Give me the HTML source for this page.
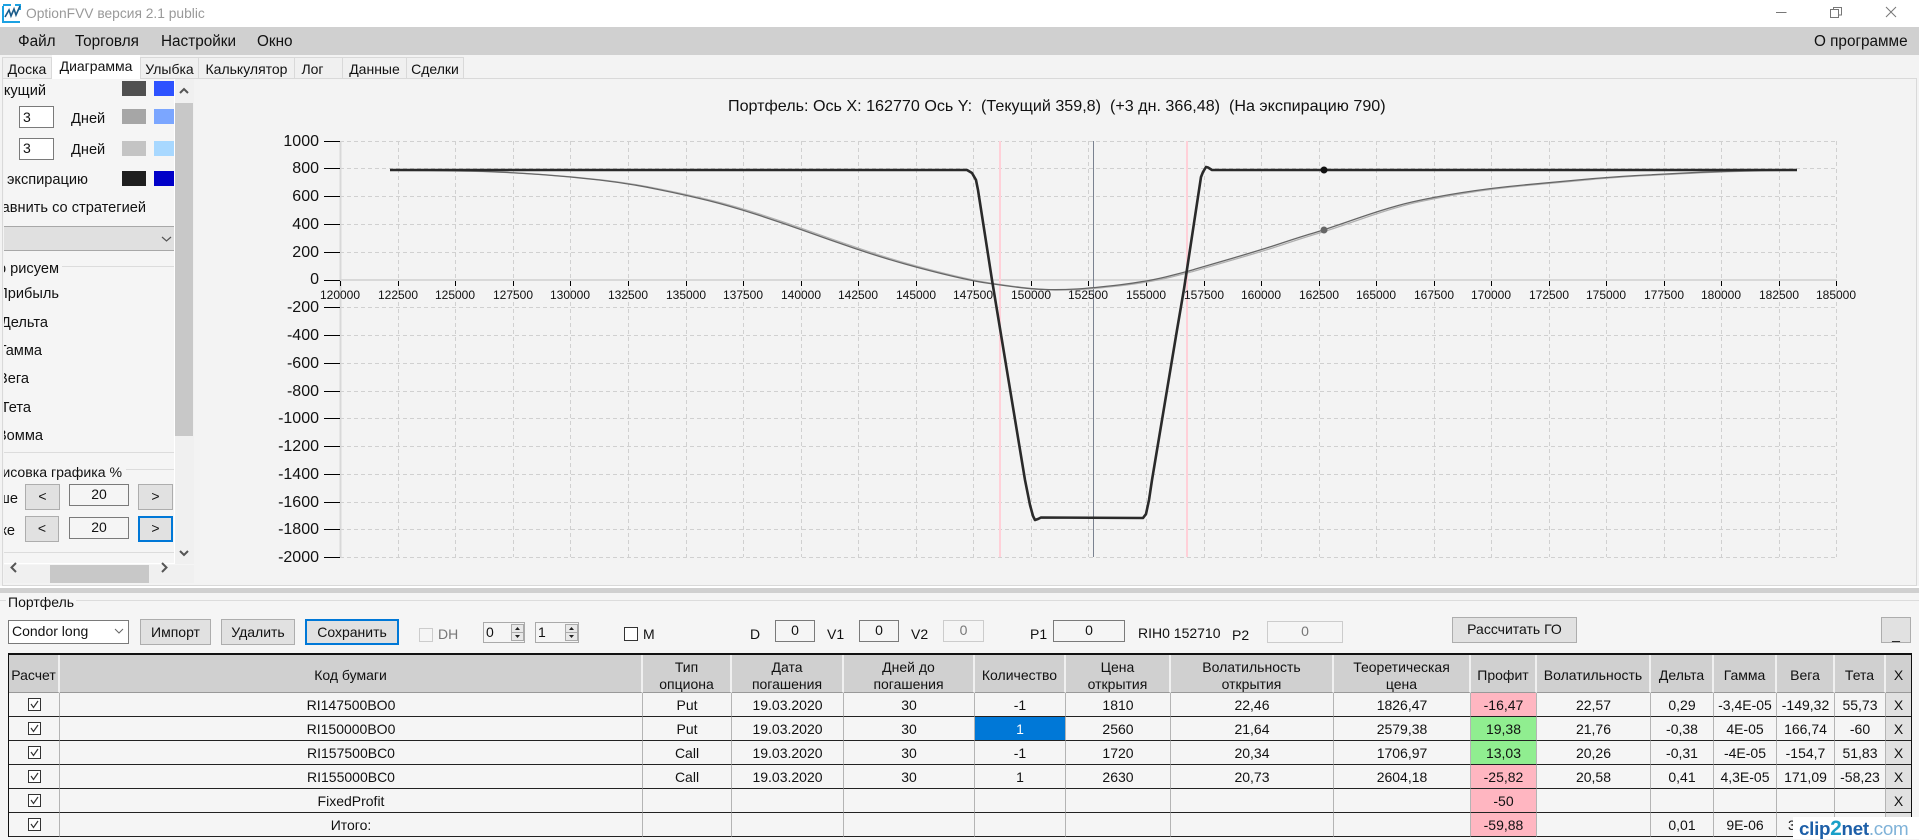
<!DOCTYPE html>
<html><head><meta charset="utf-8"><title>OptionFVV</title>
<style>
html,body{margin:0;padding:0}
body{width:1919px;height:839px;position:relative;overflow:hidden;background:#f5f5f5;font-family:"Liberation Sans","Noto Sans CJK SC",sans-serif;font-size:14px;color:#111}
.a{position:absolute;white-space:pre}
.tab{position:absolute;top:57px;height:21px;line-height:22px;text-align:center;background:#f0f0f0;border:1px solid #d9d9d9;border-bottom:0;box-sizing:border-box;font-size:14px}
.sw{position:absolute;width:24px;height:15px}
.sb{position:absolute;width:20px;height:15px;left:154px}
.inp{position:absolute;box-sizing:border-box;border:1px solid #7a7a7a;background:#f5f5f5;text-align:center;font-size:14px}
.btn{position:absolute;box-sizing:border-box;border:1px solid #adadad;background:#e1e1e1;text-align:center;font-size:14px}
.r{position:absolute;width:300px;text-align:right;font-size:14.6px;height:18px;line-height:18px;white-space:pre}
table{position:absolute;left:8px;top:653px;width:1904px;table-layout:fixed;border-collapse:separate;border-spacing:0;border-top:2px solid #111;border-left:1px solid #111;border-right:1px solid #111;box-sizing:border-box;font-size:14px}
th{background:#d0d0d0;font-weight:normal;height:38px;padding:4px 0 0;border-right:2px solid #f0f0f0;border-bottom:1px solid #999;line-height:16.500px;overflow:hidden;box-sizing:border-box;vertical-align:middle}
td{height:24px;padding:0;border-right:1px solid #b4b4b4;border-bottom:1px solid #222;text-align:center;box-sizing:border-box;background:#f5f5f5;overflow:hidden;white-space:nowrap}
td.p{background:#ffb6c1}td.g{background:#90ee90}td.s{background:#0078d7;color:#fff}
td.x{background:#e1e1e1;border-right:0}
.c{display:inline-block;width:11px;height:11px;border:1px solid #333;background:#fff;position:relative;vertical-align:-1px}
.c svg{position:absolute;left:0;top:0}
</style></head><body>

<!-- title bar -->
<div class="a" style="left:0;top:0;width:1919px;height:27px;background:#fff"></div>
<svg class="a" style="left:0;top:0" width="26" height="27">
<path d="M3 6V22H20" fill="none" stroke="#1ba1e2" stroke-width="2"/>
<path d="M3 5H11M15 5H20V10" fill="none" stroke="#1ba1e2" stroke-width="2"/>
<path d="M5 17L9 10L11 16L14 9L16 15L20 6" fill="none" stroke="#1b5c8a" stroke-width="1.6"/>
</svg>
<div class="a" style="left:26px;top:5px;font-size:13.800px;line-height:18px;color:#999">OptionFVV версия 2.1 public</div>
<svg class="a" style="left:1770px;top:0" width="135" height="27" fill="none" stroke="#777">
<path d="M6 12.500H16.500"/><path d="M60.500 9.500H68.500V17.500H60.500ZM63.500 9.500V7.500H71.500V15H68.500"/><path d="M116 7L126 17M126 7L116 17"/>
</svg>

<!-- menu -->
<div class="a" style="left:0;top:27px;width:1919px;height:28px;background:#d0d0d0"></div>
<div class="a" style="left:18px;top:33px;font-size:15.300px;line-height:18px">Файл</div>
<div class="a" style="left:75px;top:33px;font-size:15.300px;line-height:18px">Торговля</div>
<div class="a" style="left:161px;top:33px;font-size:15.300px;line-height:18px">Настройки</div>
<div class="a" style="left:257px;top:33px;font-size:15.300px;line-height:18px">Окно</div>
<div class="a" style="left:1814px;top:33px;font-size:15.300px;line-height:18px">О программе</div>

<!-- tabs -->
<div class="a" style="left:0;top:55px;width:1919px;height:533px;background:#f3f3f3"></div>
<div class="a" style="left:2px;top:78px;width:1915px;height:508px;box-sizing:border-box;border:1px solid #d9d9d9;outline:0;background:#f3f3f3"></div>
<div class="tab" style="left:2px;width:50px">Доска</div>
<div class="tab" style="left:52px;top:55px;width:88px;height:24px;background:#fff;border:0">Диаграмма</div>
<div class="tab" style="left:140px;width:59px">Улыбка</div>
<div class="tab" style="left:198px;width:97px">Калькулятор</div>
<div class="tab" style="left:294px;width:49px;padding-right:12px">Лог</div>
<div class="tab" style="left:342px;width:65px">Данные</div>
<div class="tab" style="left:406px;width:58px">Сделки</div>

<!-- left panel -->
<div class="a" style="left:4px;top:79px;width:190px;height:504px;background:#f5f5f5;overflow:hidden">
 <div class="a" style="left:171px;top:0;width:19px;height:485px;background:#f0f0f0"></div>
</div>
<div class="a" style="left:4px;top:79px;width:171px;height:485px;overflow:hidden;border-right:1px solid #fff;box-sizing:border-box;border-bottom:1px solid #fff">
 <div class="r" style="left:-258px;top:3px">Текущий</div>
 <div class="r" style="left:-216px;top:92px">На экспирацию</div>
 <div class="r" style="left:-158px;top:120px">Сравнить со стратегией</div>
 <div class="a" style="left:0;top:147px;width:170px;height:23px;background:#e0e0e0;border-bottom:1px solid #a8a8a8;border-top:1px solid #a8a8a8"></div>
 <div class="r" style="left:-245px;top:181px">Что рисуем</div>
 <div class="a" style="left:58px;top:187px;width:113px;height:1px;background:#dcdcdc"></div>
 <div class="r" style="left:-245px;top:206px">Прибыль</div>
 <div class="r" style="left:-256px;top:235px">Дельта</div>
 <div class="r" style="left:-262px;top:263px">Гамма</div>
 <div class="r" style="left:-275px;top:291px">Вега</div>
 <div class="r" style="left:-273px;top:320px">Тета</div>
 <div class="r" style="left:-261px;top:348px">Вомма</div>
 <div class="a" style="left:0;top:373px;width:171px;height:1px;background:#dcdcdc"></div>
 <div class="r" style="left:-182px;top:384px;font-size:14.100px">Отрисовка графика %</div>
 <div class="a" style="left:122px;top:390px;width:49px;height:1px;background:#dcdcdc"></div>
 <div class="r" style="left:-286px;top:411px">Выше</div>
 <div class="r" style="left:-289px;top:443px">Ниже</div>
 <div class="a" style="left:0;top:473px;width:171px;height:1px;background:#dcdcdc"></div>
</div>
<div class="sw" style="left:122px;top:81px;background:#505050"></div><div class="sb" style="top:81px;background:#2d52ff"></div>
<div class="sw" style="left:122px;top:109px;background:#a6a6a6"></div><div class="sb" style="top:109px;background:#7ba6ff"></div>
<div class="sw" style="left:122px;top:141px;background:#c4c4c4"></div><div class="sb" style="top:141px;background:#a8d8ff"></div>
<div class="sw" style="left:122px;top:171px;background:#1e1e1e"></div><div class="sb" style="top:171px;background:#0000c8"></div>
<div class="inp" style="left:19px;top:106px;width:35px;height:22px;text-align:left;padding-left:3px;line-height:20px;background:#fff">3</div>
<div class="inp" style="left:19px;top:138px;width:35px;height:22px;text-align:left;padding-left:3px;line-height:19px;background:#fff">3</div>
<div class="a" style="left:71px;top:110px;font-size:14.600px;line-height:18px">Дней</div>
<div class="a" style="left:71px;top:141px;font-size:14.600px;line-height:18px">Дней</div>
<svg class="a" style="left:160px;top:234px" width="14" height="10"><path d="M2 3L6.500 7L11 3" fill="none" stroke="#555" stroke-width="1.200"/></svg>

<div class="btn" style="left:25px;top:484px;width:35px;height:26px;line-height:22px">&lt;</div>
<div class="inp" style="left:69px;top:484px;width:60px;height:22px;line-height:18px">20</div>
<div class="btn" style="left:138px;top:484px;width:35px;height:26px;line-height:22px">&gt;</div>
<div class="btn" style="left:25px;top:516px;width:34px;height:26px;line-height:22px">&lt;</div>
<div class="inp" style="left:69px;top:517px;width:60px;height:22px;line-height:18px">20</div>
<div class="btn" style="left:138px;top:516px;width:35px;height:26px;line-height:21px;border:2px solid #0078d7">&gt;</div>

<!-- scrollbars -->
<div class="a" style="left:175px;top:103px;width:18px;height:333px;background:#c8c8c8"></div>
<div class="a" style="left:4px;top:565px;width:190px;height:18px;background:#f0f0f0"></div>
<div class="a" style="left:50px;top:565px;width:99px;height:18px;background:#c8c8c8"></div>
<svg class="a" style="left:0;top:79px" width="200" height="505" fill="none" stroke="#555" stroke-width="2">
<path d="M180 14L184 10L188 14"/><path d="M180 472L184 476L188 472"/><path d="M16 484L11.500 488.500L16 493"/><path d="M162 484L166.500 488.500L162 493"/>
</svg>

<!-- chart -->
<svg class="a" style="left:0;top:0" width="1919" height="600" font-family="'Liberation Sans',sans-serif">
<g fill="none" stroke="#d0d0d0" stroke-dasharray="4 3" shape-rendering="crispEdges">
<path d="M398.500 141V557M455.500 141V557M513.500 141V557M570.500 141V557M628.500 141V557M686.500 141V557M743.500 141V557M801.500 141V557M858.500 141V557M916.500 141V557M973.500 141V557M1031.500 141V557M1088.500 141V557M1146.500 141V557M1204.500 141V557M1261.500 141V557M1319.500 141V557M1376.500 141V557M1434.500 141V557M1491.500 141V557M1549.500 141V557M1606.500 141V557M1664.500 141V557M1721.500 141V557M1779.500 141V557M1836.500 141V557"/>
<path d="M340 141.500H1837M340 168.500H1837M340 196.500H1837M340 224.500H1837M340 252.500H1837M340 307.500H1837M340 335.500H1837M340 363.500H1837M340 391.500H1837M340 418.500H1837M340 446.500H1837M340 474.500H1837M340 502.500H1837M340 529.500H1837M340 557.500H1837"/>
</g>
<path d="M340.500 141V558" stroke="#d8d8d8" stroke-width="2" fill="none"/>
<path d="M340 280H1837" stroke="#d8d8d8" stroke-width="2" fill="none"/>
<g stroke="#000" fill="none" shape-rendering="crispEdges">
<path d="M324 141.500H340M324 168.500H340M324 196.500H340M324 224.500H340M324 252.500H340M324 280.500H340M324 307.500H340M324 335.500H340M324 363.500H340M324 391.500H340M324 418.500H340M324 446.500H340M324 474.500H340M324 502.500H340M324 529.500H340M324 557.500H340"/>
<path d="M340.500 281V286M398.500 281V286M455.500 281V286M513.500 281V286M570.500 281V286M628.500 281V286M686.500 281V286M743.500 281V286M801.500 281V286M858.500 281V286M916.500 281V286M973.500 281V286M1031.500 281V286M1088.500 281V286M1146.500 281V286M1204.500 281V286M1261.500 281V286M1319.500 281V286M1376.500 281V286M1434.500 281V286M1491.500 281V286M1549.500 281V286M1606.500 281V286M1664.500 281V286M1721.500 281V286M1779.500 281V286M1836.500 281V286"/>
</g>
<path d="M1000 141V557M1187 141V557" stroke="#ffd0d8" stroke-width="2"/>
<path d="M1093.500 141V557" stroke="#7a8290" stroke-width="1"/>
<path transform="translate(5,.3)" fill="none" stroke="#b0b0b0" stroke-width="1.300" d="M390 170Q460 170.500 486.500 171.500Q513 172.500 542 174.600Q571 176.700 599.500 180Q628 183.300 657 189.200Q686 195 708 200.500Q730 206 755 214Q780 222 805 231Q830 240 855 248.500Q880 257 905 264Q930 271 951.500 276Q973 281 986.500 283Q1000 285 1015.500 287Q1031 289 1045.500 289.500Q1060 290 1076.500 289Q1093 288 1119.500 284.900Q1146 281.700 1166.500 276.700Q1187 271.700 1195.500 269Q1204 266.500 1232.500 258.200Q1261 250 1280.500 243.500Q1300 237 1312 233.500Q1324 230 1357 218.500Q1390 207 1412 202Q1434 197 1462.500 192.500Q1491 188 1525.500 184.800Q1560 181.700 1583 179.500Q1606 177.300 1635 175.600Q1664 174 1692 172.700Q1720 171.500 1750 170.700Q1780 170 1792 170"/>
<path fill="none" stroke="#666" stroke-width="1.300" d="M390 170Q460 170.500 486.500 171.500Q513 172.500 542 174.600Q571 176.700 599.500 180Q628 183.300 657 189.200Q686 195 708 200.500Q730 206 755 214Q780 222 805 231Q830 240 855 248.500Q880 257 905 264Q930 271 951.500 276Q973 281 986.500 283Q1000 285 1015.500 287Q1031 289 1045.500 289.500Q1060 290 1076.500 289Q1093 288 1119.500 284.900Q1146 281.700 1166.500 276.700Q1187 271.700 1195.500 269Q1204 266.500 1232.500 258.200Q1261 250 1280.500 243.500Q1300 237 1312 233.500Q1324 230 1357 218.500Q1390 207 1412 202Q1434 197 1462.500 192.500Q1491 188 1525.500 184.800Q1560 181.700 1583 179.500Q1606 177.300 1635 175.600Q1664 174 1692 172.700Q1720 171.500 1750 170.700Q1780 170 1797 170"/>
<polyline fill="none" stroke="#2a2a2a" stroke-width="2.600" stroke-linejoin="round" points="390,170 960,170 967,170 972,173 976,180 978,190 992,280 1025,480 1030,505 1033,516 1035,520 1038,519 1041,517.500 1143,518 1146,514 1149,500 1152,480 1177,330 1184,289 1201,177 1203,172 1206,167 1208,167.500 1212,170 1797,170"/>
<circle cx="1324" cy="170" r="3.500" fill="#111"/>
<circle cx="1324" cy="230" r="3.500" fill="#666"/>
<g font-size="16" text-anchor="end" fill="#111">
<text x="319" y="146">1000</text><text x="319" y="173">800</text><text x="319" y="201">600</text><text x="319" y="229">400</text><text x="319" y="257">200</text><text x="319" y="284">0</text><text x="319" y="312">-200</text><text x="319" y="340">-400</text><text x="319" y="368">-600</text><text x="319" y="396">-800</text><text x="319" y="423">-1000</text><text x="319" y="451">-1200</text><text x="319" y="479">-1400</text><text x="319" y="507">-1600</text><text x="319" y="534">-1800</text><text x="319" y="562">-2000</text>
</g>
<g font-size="12" text-anchor="middle" fill="#111">
<text x="340" y="299">120000</text><text x="398" y="299">122500</text><text x="455" y="299">125000</text><text x="513" y="299">127500</text><text x="570" y="299">130000</text><text x="628" y="299">132500</text><text x="686" y="299">135000</text><text x="743" y="299">137500</text><text x="801" y="299">140000</text><text x="858" y="299">142500</text><text x="916" y="299">145000</text><text x="973" y="299">147500</text><text x="1031" y="299">150000</text><text x="1088" y="299">152500</text><text x="1146" y="299">155000</text><text x="1204" y="299">157500</text><text x="1261" y="299">160000</text><text x="1319" y="299">162500</text><text x="1376" y="299">165000</text><text x="1434" y="299">167500</text><text x="1491" y="299">170000</text><text x="1549" y="299">172500</text><text x="1606" y="299">175000</text><text x="1664" y="299">177500</text><text x="1721" y="299">180000</text><text x="1779" y="299">182500</text><text x="1836" y="299">185000</text>
</g>
<text x="728" y="111" font-size="16.130" xml:space="preserve" fill="#111">Портфель: Ось X: 162770 Ось Y:  (Текущий 359,8)  (+3 дн. 366,48)  (На экспирацию 790)</text>
</svg>

<!-- splitter + group -->
<div class="a" style="left:0;top:586px;width:1919px;height:2px;background:#fff"></div>
<div class="a" style="left:0;top:588px;width:1919px;height:5px;background:#d0d0d0"></div>
<div class="a" style="left:0;top:593px;width:1919px;height:246px;background:#f5f5f5"></div>
<div class="a" style="left:0;top:600px;width:1919px;height:1px;background:#dcdcdc"></div>
<div class="a" style="left:6px;top:594px;padding:0 2px;background:#f5f5f5;font-size:14px;line-height:17px">Портфель</div>

<div class="inp" style="left:8px;top:620px;width:121px;height:24px;background:#fff;text-align:left;padding-left:3px;line-height:20px">Condor long</div>
<svg class="a" style="left:113px;top:627px" width="14" height="10"><path d="M2 2L6 6L10 2" fill="none" stroke="#666"/></svg>
<div class="btn" style="left:140px;top:619px;width:71px;height:26px;line-height:24px">Импорт</div>
<div class="btn" style="left:221px;top:619px;width:74px;height:26px;line-height:24px">Удалить</div>
<div class="btn" style="left:305px;top:619px;width:94px;height:26px;line-height:22px;border:2px solid #0078d7">Сохранить</div>
<div class="a" style="left:419px;top:628px;width:12px;height:12px;border:1px solid #ccc;background:#f5f5f5"></div>
<div class="a" style="left:438px;top:626px;line-height:17px;color:#777">DH</div>
<div class="inp" style="left:483px;top:622px;width:42px;height:21px;border-color:#aaa;text-align:left;padding-left:2px;line-height:18px">0</div>
<div class="inp" style="left:535px;top:622px;width:44px;height:21px;border-color:#aaa;text-align:left;padding-left:2px;line-height:18px">1</div>
<svg class="a" style="left:510px;top:622px" width="70" height="21">
<g fill="#e8e8e8" stroke="#aaa"><rect x="1.500" y="2.500" width="12" height="8"/><rect x="1.500" y="10.500" width="12" height="8"/><rect x="55.500" y="2.500" width="12" height="8"/><rect x="55.500" y="10.500" width="12" height="8"/></g>
<path d="M5 8L7.500 5L10 8ZM5 13L7.500 16L10 13ZM59 8L61.500 5L64 8ZM59 13L61.500 16L64 13Z" fill="#222"/>
</svg>
<div class="a" style="left:624px;top:627px;width:12px;height:12px;border:1px solid #333;background:#fff"></div>
<div class="a" style="left:643px;top:626px;line-height:17px">M</div>

<div class="a" style="left:750px;top:626px;line-height:17px">D</div>
<div class="inp" style="left:775px;top:620px;width:40px;height:22px;line-height:18px">0</div>
<div class="a" style="left:827px;top:626px;line-height:17px">V1</div>
<div class="inp" style="left:859px;top:620px;width:40px;height:22px;line-height:18px">0</div>
<div class="a" style="left:911px;top:626px;line-height:17px">V2</div>
<div class="inp" style="left:943px;top:620px;width:41px;height:22px;line-height:18px;border-color:#ccc;color:#777">0</div>
<div class="a" style="left:1030px;top:626px;line-height:17px">P1</div>
<div class="inp" style="left:1053px;top:620px;width:72px;height:22px;line-height:18px">0</div>
<div class="a" style="left:1138px;top:625px;line-height:17px">RIH0 152710</div>
<div class="a" style="left:1232px;top:627px;line-height:17px">P2</div>
<div class="inp" style="left:1267px;top:621px;width:76px;height:22px;line-height:19px;border-color:#ccc;color:#777">0</div>
<div class="btn" style="left:1452px;top:617px;width:125px;height:26px;line-height:23px">Рассчитать ГО</div>
<div class="btn" style="left:1881px;top:617px;width:30px;height:26px;line-height:32px">_</div>

<!-- table -->
<table>
<colgroup><col style="width:51px"><col style="width:583px"><col style="width:89px"><col style="width:112px"><col style="width:131px"><col style="width:91px"><col style="width:105px"><col style="width:163px"><col style="width:137px"><col style="width:66px"><col style="width:114px"><col style="width:63px"><col style="width:63px"><col style="width:58px"><col style="width:51px"><col style="width:25px"></colgroup>
<tr><th>Расчет</th><th>Код бумаги</th><th>Тип<br>опциона</th><th>Дата<br>погашения</th><th>Дней до<br>погашения</th><th>Количество</th><th>Цена<br>открытия</th><th>Волатильность<br>открытия</th><th>Теоретическая<br>цена</th><th>Профит</th><th>Волатильность</th><th>Дельта</th><th>Гамма</th><th>Вега</th><th>Тета</th><th style="border-right:0">X</th></tr>
<tr><td><span class="c"><svg width="11" height="11"><path d="M2 5L4.500 8.500L9 2" fill="none" stroke="#333" stroke-width="1.200"/></svg></span></td><td>RI147500BO0</td><td>Put</td><td>19.03.2020</td><td>30</td><td>-1</td><td>1810</td><td>22,46</td><td>1826,47</td><td class="p">-16,47</td><td>22,57</td><td>0,29</td><td>-3,4E-05</td><td>-149,32</td><td>55,73</td><td class="x">X</td></tr>
<tr><td><span class="c"><svg width="11" height="11"><path d="M2 5L4.500 8.500L9 2" fill="none" stroke="#333" stroke-width="1.200"/></svg></span></td><td>RI150000BO0</td><td>Put</td><td>19.03.2020</td><td>30</td><td class="s">1</td><td>2560</td><td>21,64</td><td>2579,38</td><td class="g">19,38</td><td>21,76</td><td>-0,38</td><td>4E-05</td><td>166,74</td><td>-60</td><td class="x">X</td></tr>
<tr><td><span class="c"><svg width="11" height="11"><path d="M2 5L4.500 8.500L9 2" fill="none" stroke="#333" stroke-width="1.200"/></svg></span></td><td>RI157500BC0</td><td>Call</td><td>19.03.2020</td><td>30</td><td>-1</td><td>1720</td><td>20,34</td><td>1706,97</td><td class="g">13,03</td><td>20,26</td><td>-0,31</td><td>-4E-05</td><td>-154,7</td><td>51,83</td><td class="x">X</td></tr>
<tr><td><span class="c"><svg width="11" height="11"><path d="M2 5L4.500 8.500L9 2" fill="none" stroke="#333" stroke-width="1.200"/></svg></span></td><td>RI155000BC0</td><td>Call</td><td>19.03.2020</td><td>30</td><td>1</td><td>2630</td><td>20,73</td><td>2604,18</td><td class="p">-25,82</td><td>20,58</td><td>0,41</td><td>4,3E-05</td><td>171,09</td><td>-58,23</td><td class="x">X</td></tr>
<tr><td><span class="c"><svg width="11" height="11"><path d="M2 5L4.500 8.500L9 2" fill="none" stroke="#333" stroke-width="1.200"/></svg></span></td><td>FixedProfit</td><td></td><td></td><td></td><td></td><td></td><td></td><td></td><td class="p">-50</td><td></td><td></td><td></td><td></td><td></td><td class="x">X</td></tr>
<tr><td><span class="c"><svg width="11" height="11"><path d="M2 5L4.500 8.500L9 2" fill="none" stroke="#333" stroke-width="1.200"/></svg></span></td><td>Итого:</td><td></td><td></td><td></td><td></td><td></td><td></td><td></td><td class="p">-59,88</td><td></td><td>0,01</td><td>9E-06</td><td>3,456</td><td></td><td class="x"></td></tr>
</table>

<!-- watermark -->
<div class="a" style="left:1793px;top:817px;width:126px;height:22px;background:#fff"></div>
<div class="a" style="left:1799px;top:819px;font-size:18.800px;line-height:20px;letter-spacing:-.3px;font-weight:bold;color:#1d5fa8">clip<span style="color:#1aa0c8;font-size:21px">2</span>net<span style="color:#7fb2d8;font-weight:normal">.com</span></div>
</body></html>
